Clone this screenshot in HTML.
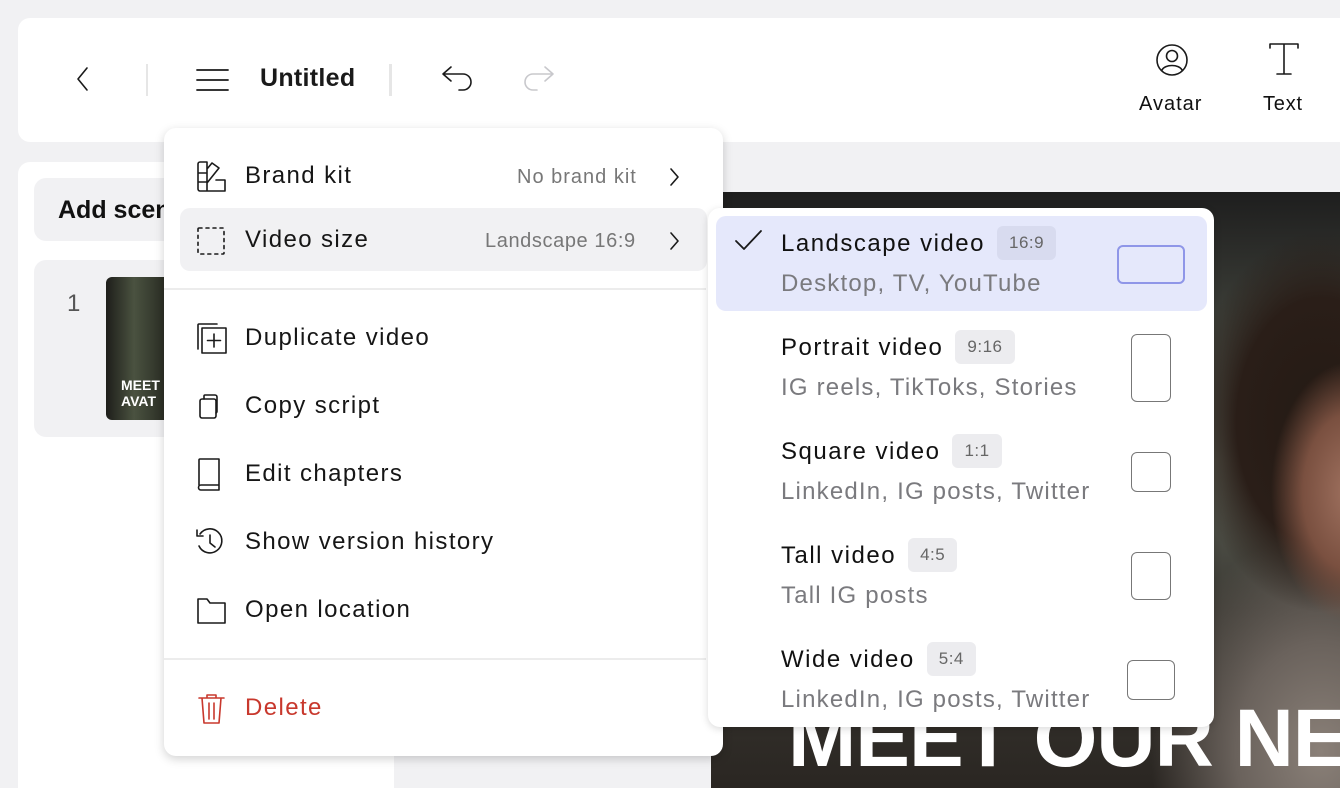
<!DOCTYPE html>
<html><head><meta charset="utf-8"><style>
*{margin:0;padding:0;box-sizing:border-box}
body{width:1340px;height:788px;overflow:hidden;background:#f1f1f3;font-family:"Liberation Sans",sans-serif;position:relative;color:#111}
.abs{position:absolute}
svg{position:absolute;fill:none;stroke:#1a1a1a;stroke-width:1.6;stroke-linecap:round;stroke-linejoin:round}
.item{position:absolute;left:245px;font-size:24px;letter-spacing:1.4px;color:#161616}
.sub{font-size:20px;letter-spacing:1px;color:#777}
.badge{display:inline-block;background:#ececef;color:#666;font-size:17px;padding:7px 12px;border-radius:6px;vertical-align:3px;margin-left:12px;letter-spacing:.5px}
.t{position:absolute;left:781px;font-size:24px;color:#111;letter-spacing:1.5px}
.s{position:absolute;left:781px;font-size:24px;color:#7a7a7e;letter-spacing:1.2px}
.box{position:absolute;border:1.5px solid #777;border-radius:6px}
</style></head><body>
<div class="abs" style="left:18px;top:18px;width:1322px;height:124px;background:#fff;border-radius:12px 0 0 12px"></div>
<svg style="left:70px;top:66px" width="24" height="28" viewBox="0 0 24 28"><path d="M17 2L8 13l9 11"/></svg>
<div class="abs" style="left:146px;top:64px;width:2px;height:32px;background:#e6e6e6"></div>
<svg style="left:195px;top:68px" width="34" height="24"><path d="M2 2h31M2 12h31M2 22h31" stroke-width="1.8"/></svg>
<div class="abs" style="left:260px;top:64px;font-size:25px;font-weight:bold;color:#1a1a1a;letter-spacing:.3px">Untitled</div>
<div class="abs" style="left:389px;top:64px;width:3px;height:32px;background:#e6e6e6"></div>
<svg style="left:440px;top:64px" width="36" height="30"><path d="M11 3L3 10l8 7M3 10h20a8 8 0 0 1 0 16h-4"/></svg>
<svg style="left:520px;top:64px;stroke:#c8c8cc" width="36" height="30"><path d="M25 3l8 7-8 7M33 10H13a8 8 0 0 0 0 16h4"/></svg>
<svg style="left:1154px;top:42px" width="36" height="36"><circle cx="18" cy="18" r="15"/><circle cx="18" cy="14" r="5.5"/><path d="M8 28c3-6 17-6 20 0"/></svg>
<div class="abs" style="left:1139px;top:93px;font-size:20px;letter-spacing:1px">Avatar</div>
<svg style="left:1268px;top:42px" width="32" height="34"><path d="M2 2h28M2 2v4M30 2v4M16 2v30M9 32h14"/></svg>
<div class="abs" style="left:1263px;top:93px;font-size:20px;letter-spacing:.8px">Text</div>
<div class="abs" style="left:18px;top:162px;width:376px;height:626px;background:#fff;border-radius:12px 12px 0 0"></div>
<div class="abs" style="left:34px;top:178px;width:360px;height:63px;background:#f1f1f3;border-radius:12px"></div>
<div class="abs" style="left:58px;top:196px;font-size:25px;font-weight:bold">Add scene</div>
<div class="abs" style="left:34px;top:260px;width:360px;height:177px;background:#f1f1f3;border-radius:12px"></div>
<div class="abs" style="left:67px;top:290px;font-size:24px;color:#555">1</div>
<div class="abs" style="left:106px;top:277px;width:70px;height:143px;background:linear-gradient(90deg,#1e1e1a,#4a5240 40%,#1f201a);border-radius:6px"></div>
<div class="abs" style="left:121px;top:377px;font-size:14px;font-weight:bold;color:#fff;line-height:16px">MEET<br>AVAT</div>
<div class="abs" style="left:711px;top:192px;width:629px;height:596px;overflow:hidden;background:radial-gradient(ellipse 80px 130px at 640px 300px,#a07260 0%,#7a5040 60%,transparent 100%),radial-gradient(ellipse 130px 190px at 610px 230px,#241a14 0%,#2a1e18 65%,transparent 100%),radial-gradient(ellipse 170px 220px at 610px 560px,#8a8078 0%,#6a625c 50%,transparent 100%),linear-gradient(180deg,#1e1e1e 0%,#3a3c36 20%,#5a5e54 45%,#3c3a34 70%,#2a2622 100%)">
<div class="abs" style="left:77px;top:500px;font-size:82px;font-weight:900;color:#fff;white-space:nowrap;letter-spacing:-1px">MEET OUR NEW</div>
</div>
<div class="abs" style="left:164px;top:128px;width:559px;height:628px;background:#fff;border-radius:12px;box-shadow:0 3px 10px rgba(0,0,0,.18)"></div>
<div class="abs" style="left:180px;top:208px;width:527px;height:63px;background:#f1f1f3;border-radius:10px"></div>
<div class="abs" style="left:164px;top:288px;width:542px;height:2px;background:#ececec"></div>
<div class="abs" style="left:164px;top:658px;width:542px;height:2px;background:#ececec"></div>
<svg style="left:195px;top:160px" width="34" height="34"><path d="M3 4a2 2 0 0 1 2-2h7v29H5a2 2 0 0 1-2-2zM3 13h9M3 22h9M12 9l5-6 7 5-12 15M12 31h18V20H21"/></svg>
<div class="item" style="top:162px">Brand kit</div>
<div class="abs sub" style="left:517px;top:166px">No brand kit</div>
<svg style="left:668px;top:166px" width="14" height="22"><path d="M3 3l7 8-7 8"/></svg>
<svg style="left:196px;top:226px" width="30" height="30"><rect x="2" y="2" width="26" height="26" rx="1" stroke-dasharray="3 4"/></svg>
<div class="item" style="top:226px">Video size</div>
<div class="abs sub" style="left:485px;top:230px;letter-spacing:.6px">Landscape 16:9</div>
<svg style="left:668px;top:230px" width="14" height="22"><path d="M3 3l7 8-7 8"/></svg>
<svg style="left:195px;top:321px" width="36" height="34"><path d="M3 28V4a1 1 0 0 1 1-1h18M7 7h24v25H7zM19 13v13M12.5 19.5h13"/></svg>
<div class="item" style="top:324px">Duplicate video</div>
<svg style="left:196px;top:392px" width="30" height="30"><rect x="4" y="7" width="16" height="19" rx="2"/><path d="M8 7V4a1 1 0 0 1 1-1h10a2 2 0 0 1 2 2v14a2 2 0 0 1-1 2"/></svg>
<div class="item" style="top:392px">Copy script</div>
<svg style="left:196px;top:456px" width="30" height="36"><path d="M3 29V4a1 1 0 0 1 1-1h19v26H5a2 2 0 0 0 0 5h18v-5"/></svg>
<div class="item" style="top:460px">Edit chapters</div>
<svg style="left:194px;top:526px" width="32" height="32"><path d="M6 8a12 12 0 1 1-1 12M3 4v6h6M16 9v8l5 4"/></svg>
<div class="item" style="top:528px">Show version history</div>
<svg style="left:195px;top:596px" width="34" height="30"><path d="M3 3h9l3 4h15v20H3z"/></svg>
<div class="item" style="top:596px">Open location</div>
<svg style="left:197px;top:692px;stroke:#c8382d" width="30" height="34"><path d="M2 6h25M10 6V3h9v3M5 6l2 25h15l2-25M12 11v16M17 11v16"/></svg>
<div class="item" style="top:694px;color:#c8382d">Delete</div>
<div class="abs" style="left:708px;top:208px;width:506px;height:519px;background:#fff;border-radius:12px;box-shadow:0 2px 8px rgba(0,0,0,.15)"></div>
<div class="abs" style="left:716px;top:216px;width:491px;height:95px;background:#e5e8fb;border-radius:10px"></div>
<svg style="left:733px;top:228px" width="32" height="24"><path d="M3 13l8 8L28 3" stroke-width="1.8"/></svg>
<div class="t" style="top:226px">Landscape video<span class="badge" style="background:#d8dbef">16:9</span></div>
<div class="s" style="top:270px">Desktop, TV, YouTube</div>
<div class="box" style="left:1117px;top:245px;width:68px;height:39px;border-color:#8f96e8;border-width:2px"></div>
<div class="t" style="top:330px">Portrait video<span class="badge">9:16</span></div>
<div class="s" style="top:374px">IG reels, TikToks, Stories</div>
<div class="box" style="left:1131px;top:334px;width:40px;height:68px"></div>
<div class="t" style="top:434px">Square video<span class="badge">1:1</span></div>
<div class="s" style="top:478px">LinkedIn, IG posts, Twitter</div>
<div class="box" style="left:1131px;top:452px;width:40px;height:40px"></div>
<div class="t" style="top:538px">Tall video<span class="badge">4:5</span></div>
<div class="s" style="top:582px">Tall IG posts</div>
<div class="box" style="left:1131px;top:552px;width:40px;height:48px"></div>
<div class="t" style="top:642px">Wide video<span class="badge">5:4</span></div>
<div class="s" style="top:686px">LinkedIn, IG posts, Twitter</div>
<div class="box" style="left:1127px;top:660px;width:48px;height:40px"></div>
</body></html>
